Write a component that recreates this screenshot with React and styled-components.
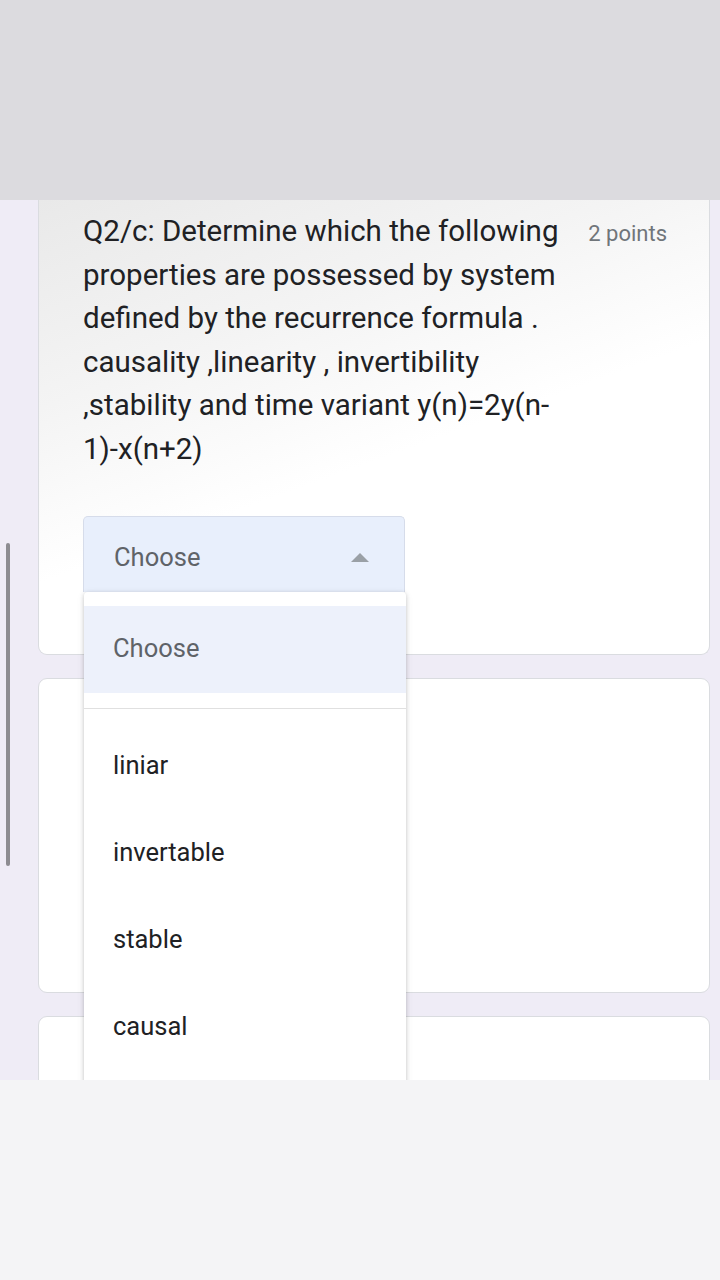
import React from 'react';
import styled, { createGlobalStyle } from 'styled-components';

const Global = createGlobalStyle`
  html, body {
    margin: 0;
    padding: 0;
  }
  body {
    font-family: Roboto, "Noto Sans", Arial, sans-serif;
    background: #f4f4f6;
  }
`;

const Screen = styled.div`
  width: 720px;
  height: 1280px;
  display: flex;
  flex-direction: column;
  overflow: hidden;
`;

const TopShade = styled.div`
  height: 200px;
  flex-shrink: 0;
  background: #dcdbdf;
`;

const BottomShade = styled.div`
  height: 200px;
  flex-shrink: 0;
  background: #f4f4f6;
`;

const Viewport = styled.div`
  position: relative;
  height: 880px;
  flex-shrink: 0;
  overflow: hidden;
  background: #efecf6;
  display: flex;
  flex-direction: column;
  gap: 23px;
  padding: 0 10px 0 38px;
`;

const Scrollbar = styled.div`
  position: absolute;
  left: 6px;
  top: 343px;
  width: 4px;
  height: 323px;
  border-radius: 2px;
  background: #8d8c91;
`;

const Card = styled.div`
  flex-shrink: 0;
  background: #fff;
  border: 1px solid #dadce0;
  border-top: ${({ $cut }) => ($cut ? 'none' : '1px solid #dadce0')};
  border-radius: ${({ $cut }) => ($cut ? '0 0 9px 9px' : '9px')};
  height: ${({ $h }) => $h}px;
  box-sizing: border-box;
  position: relative;
`;

const FirstCard = styled(Card)`
  padding: 10px 44px 0 44px;
  background: linear-gradient(160deg, #e9e9e9 0%, #f4f4f4 30%, #ffffff 55%);
`;

const Header = styled.div`
  display: flex;
  align-items: flex-start;
  justify-content: space-between;
`;

const Question = styled.div`
  font-size: 29.5px;
  line-height: 43.6px;
  color: #202124;
  white-space: nowrap;
`;

const Line = styled.div``;

const Points = styled.div`
  margin-top: 11px;
  margin-right: -2px;
  font-size: 22px;
  color: #70757a;
`;

const SelectWrap = styled.div`
  position: relative;
  margin-top: 44px;
  width: 322px;
`;

const SelectBox = styled.div`
  height: 76px;
  box-sizing: border-box;
  background: #e8effc;
  border: 1px solid #d6dcea;
  border-bottom: none;
  border-radius: 5px 5px 0 0;
  display: flex;
  align-items: center;
  justify-content: space-between;
  padding: 6px 35px 0 30px;
  font-size: 25.5px;
  color: #5f6368;
`;

const Arrow = styled.span`
  width: 0;
  height: 0;
  border-left: 9px solid transparent;
  border-right: 9px solid transparent;
  border-bottom: 9px solid #9aa0a6;
  margin-top: 0;
`;

const Menu = styled.div`
  position: absolute;
  top: 76px;
  left: 1px;
  width: 322px;
  height: 520px;
  background: #fff;
  border-radius: 4px 4px 0 0;
  box-shadow: 0 1px 4px rgba(0, 0, 0, 0.18), 0 2px 8px rgba(0, 0, 0, 0.08);
  padding-top: 14px;
  z-index: 2;
`;

const Option = styled.div`
  height: 87px;
  display: flex;
  align-items: center;
  padding: 0 0 3px 29px;
  box-sizing: border-box;
  font-size: 25.5px;
  color: ${({ $active }) => ($active ? '#5f6368' : '#202124')};
  background: ${({ $active }) => ($active ? '#edf1fb' : 'transparent')};
`;

const Divider = styled.div`
  height: 1px;
  background: #e0e0e0;
  margin: 15px 0 14px;
`;

const questionLines = [
  'Q2/c: Determine which the following',
  'properties are possessed by system',
  'defined by the recurrence formula .',
  'causality ,linearity , invertibility',
  ',stability and time variant y(n)=2y(n-',
  '1)-x(n+2)',
];

const options = ['liniar', 'invertable', 'stable', 'causal'];

export default function App() {
  return (
    <Screen>
      <Global />
      <TopShade />
      <Viewport>
        <Scrollbar />
        <FirstCard $cut $h={455}>
          <Header>
            <Question>
              {questionLines.map((l) => (
                <Line key={l}>{l}</Line>
              ))}
            </Question>
            <Points>2 points</Points>
          </Header>
          <SelectWrap>
            <SelectBox>
              Choose
              <Arrow />
            </SelectBox>
            <Menu>
              <Option $active>Choose</Option>
              <Divider />
              {options.map((o) => (
                <Option key={o}>{o}</Option>
              ))}
            </Menu>
          </SelectWrap>
        </FirstCard>
        <Card $h={315} />
        <Card $h={200} />
      </Viewport>
      <BottomShade />
    </Screen>
  );
}
